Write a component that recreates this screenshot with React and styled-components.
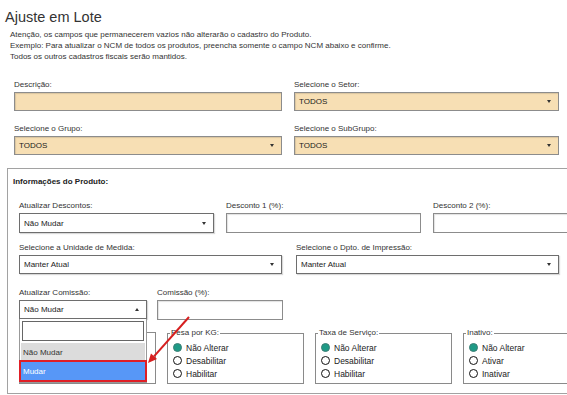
import React from 'react';
import styled, { createGlobalStyle } from 'styled-components';

const GlobalStyle = createGlobalStyle`
  html, body {
    margin: 0;
    padding: 0;
    background: #fff;
    overflow: hidden;
  }
  body {
    font-family: "Liberation Sans", Arial, sans-serif;
    color: #333;
  }
`;

const Page = styled.div`
  width: 660px;
  padding-top: 8px;
`;

const Title = styled.h2`
  margin: 0 0 0 5px;
  font-size: 14.5px;
  font-weight: normal;
  line-height: 18px;
  color: #333;
`;

const Notice = styled.div`
  margin: 3px 0 0 10px;
  font-size: 8px;
  line-height: 11px;
  color: #333;
`;

const TopGrid = styled.div`
  display: grid;
  grid-template-columns: 268px 265px;
  column-gap: 12px;
  row-gap: 13px;
  margin: 18px 0 0 14px;
`;

const Field = styled.div`
  display: flex;
  flex-direction: column;
  position: relative;
`;

const Label = styled.label`
  font-size: 8px;
  line-height: 10px;
  margin-bottom: 2px;
  color: #333;
  white-space: nowrap;
`;

const TextBox = styled.input`
  box-sizing: border-box;
  height: ${p => p.$h || 19}px;
  width: 100%;
  margin: 0;
  padding: 0 4px;
  border: 1px solid #8c8c8c;
  background: ${p => (p.$beige ? '#f7dfb4' : '#fff')};
  box-shadow: inset 1px 1px 1px rgba(0, 0, 0, 0.12);
  outline: none;
`;

const SelectBox = styled.div`
  box-sizing: border-box;
  height: ${p => p.$h || 19}px;
  display: flex;
  align-items: center;
  justify-content: space-between;
  padding: 0 7px 0 4px;
  border: 1px solid ${p => (p.$beige ? '#8c8c8c' : '#6e6e6e')};
  background: ${p => (p.$beige ? '#f7dfb4' : '#fff')};
  box-shadow: ${p => (p.$beige ? 'inset 1px 1px 1px rgba(0,0,0,0.12)' : '1px 1px 1px rgba(0,0,0,0.15)')};
  font-size: 8px;
  color: #1a1a1a;
`;

const Caret = styled.span`
  width: 0;
  height: 0;
  border-left: 2.5px solid transparent;
  border-right: 2.5px solid transparent;
  ${p => (p.$up ? 'border-bottom: 3px solid #333;' : 'border-top: 3px solid #333;')}
`;

const MainBox = styled.div`
  position: relative;
  margin: 13px 0 0 7px;
  padding: 8px 0 9px 11px;
  border: 1px solid #a2a2a2;
`;

const BoxTitle = styled.div`
  margin-left: -6px;
  font-size: 8px;
  line-height: 10px;
  font-weight: bold;
  color: #222;
`;

const Row = styled.div`
  display: grid;
  grid-template-columns: ${p => p.$cols};
  column-gap: ${p => p.$gap}px;
  margin-top: ${p => p.$top}px;
`;

const Dropdown = styled.div`
  position: absolute;
  top: 100%;
  left: 0;
  width: 100%;
  box-sizing: border-box;
  background: #fff;
  border: 1px solid #999;
  border-top: none;
  padding: 1px 1px 2px;
  z-index: 5;
`;

const SearchBox = styled.div`
  height: 20px;
  margin: 1px;
  box-sizing: border-box;
  border: 1px solid #666;
  background: #fff;
`;

const Option = styled.div`
  height: 18px;
  margin-top: ${p => (p.$first ? 2 : 1)}px;
  padding-left: 2px;
  display: flex;
  align-items: center;
  font-size: 8px;
  color: ${p => (p.$active ? '#fff' : '#333')};
  background: ${p => (p.$active ? '#5797f7' : '#dcdcdc')};
  outline: ${p => (p.$active ? '2px solid #e01f26' : 'none')};
`;

const RadioSet = styled.fieldset`
  box-sizing: border-box;
  margin: 0;
  min-width: 0;
  height: ${p => (p.$empty ? '52px' : 'auto')};
  align-self: end;
  padding: 3px 0 3px 5px;
  border: 1px solid #8a8a8a;
`;

const Legend = styled.legend`
  margin-left: -3px;
  padding: 0 1px;
  font-size: 8px;
  line-height: 10px;
  color: #333;
`;

const RadioItem = styled.div`
  display: flex;
  align-items: center;
  gap: 4px;
  height: 13px;
  font-size: 8.5px;
  color: #222;
`;

const RadioDot = styled.span`
  box-sizing: border-box;
  width: 9px;
  height: 9px;
  border-radius: 50%;
  border: ${p => (p.$on ? '1px solid #3c7d74' : '1.5px solid #111')};
  background: ${p => (p.$on ? '#1e9a86' : '#fff')};
`;

const Pointer = styled.svg`
  position: absolute;
  left: 132px;
  top: 141px;
  z-index: 6;
  overflow: visible;
`;

function Radios({ legend, options }) {
  return (
    <RadioSet>
      <Legend>{legend}</Legend>
      {options.map((o, i) => (
        <RadioItem key={o}>
          <RadioDot $on={i === 0} />
          {o}
        </RadioItem>
      ))}
    </RadioSet>
  );
}

export default function App() {
  return (
    <Page>
      <GlobalStyle />
      <Title>Ajuste em Lote</Title>
      <Notice>
        <div>Atenção, os campos que permanecerem vazios não alterarão o cadastro do Produto.</div>
        <div>Exemplo: Para atualizar o NCM de todos os produtos, preencha somente o campo NCM abaixo e confirme.</div>
        <div>Todos os outros cadastros fiscais serão mantidos.</div>
      </Notice>

      <TopGrid>
        <Field>
          <Label>Descrição:</Label>
          <TextBox $beige readOnly />
        </Field>
        <Field>
          <Label>Selecione o Setor:</Label>
          <SelectBox $beige>TODOS<Caret /></SelectBox>
        </Field>
        <Field>
          <Label>Selecione o Grupo:</Label>
          <SelectBox $beige>TODOS<Caret /></SelectBox>
        </Field>
        <Field>
          <Label>Selecione o SubGrupo:</Label>
          <SelectBox $beige>TODOS<Caret /></SelectBox>
        </Field>
      </TopGrid>

      <MainBox>
        <BoxTitle>Informações do Produto:</BoxTitle>

        <Row $cols="195px 195px 195px" $gap={12} $top={14}>
          <Field>
            <Label>Atualizar Descontos:</Label>
            <SelectBox $h={20}>Não Mudar<Caret /></SelectBox>
          </Field>
          <Field>
            <Label>Desconto 1 (%):</Label>
            <TextBox $h={20} readOnly />
          </Field>
          <Field>
            <Label>Desconto 2 (%):</Label>
            <TextBox $h={20} readOnly />
          </Field>
        </Row>

        <Row $cols="263px 263px" $gap={14} $top={10}>
          <Field>
            <Label>Selecione a Unidade de Medida:</Label>
            <SelectBox>Manter Atual<Caret /></SelectBox>
          </Field>
          <Field>
            <Label>Selecione o Dpto. de Impressão:</Label>
            <SelectBox>Manter Atual<Caret /></SelectBox>
          </Field>
        </Row>

        <Row $cols="128px 126px" $gap={10} $top={14}>
          <Field>
            <Label>Atualizar Comissão:</Label>
            <Field>
              <SelectBox>Não Mudar<Caret $up /></SelectBox>
              <Dropdown>
                <SearchBox />
                <Option $first>Não Mudar</Option>
                <Option $active>Mudar</Option>
              </Dropdown>
            </Field>
          </Field>
          <Field>
            <Label>Comissão (%):</Label>
            <TextBox $h={20} readOnly />
          </Field>
        </Row>

        <Row $cols="137px 137px 137px 137px" $gap={11} $top={8}>
          <RadioSet $empty />
          <Radios legend="Pesa por KG:" options={['Não Alterar', 'Desabilitar', 'Habilitar']} />
          <Radios legend="Taxa de Serviço:" options={['Não Alterar', 'Desabilitar', 'Habilitar']} />
          <Radios legend="Inativo:" options={['Não Alterar', 'Ativar', 'Inativar']} />
        </Row>

        <Pointer width="60" height="60" viewBox="0 0 60 60">
          <line x1="49" y1="7" x2="14" y2="46.3" stroke="#d61f1f" strokeWidth="2" />
          <polygon points="8,53 17,48.9 11,43.6" fill="#d61f1f" />
        </Pointer>
      </MainBox>
    </Page>
  );
}
